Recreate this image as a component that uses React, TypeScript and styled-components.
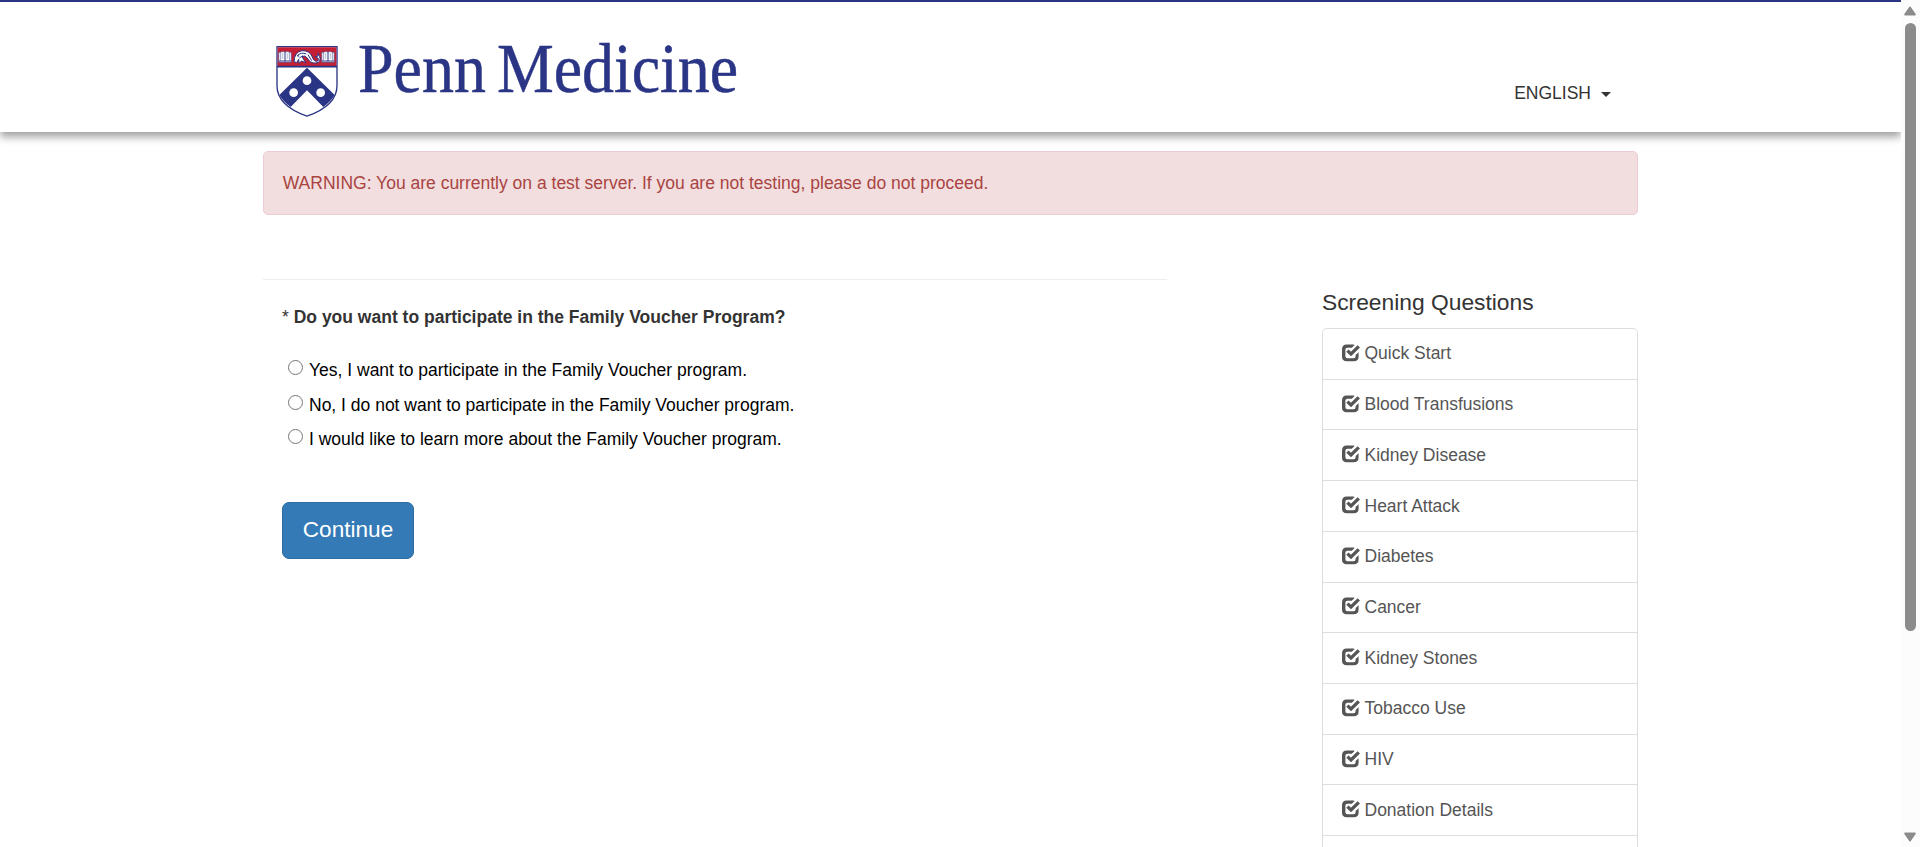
import React from "react";
import styled, { createGlobalStyle } from "styled-components";

const navy = "#2a3585";

const GlobalStyle = createGlobalStyle`
  * { box-sizing: border-box; }
  body {
    margin: 0;
    overflow: hidden;
    background: #fff;
    color: #333;
    font: 17.5px/25px "Liberation Sans", Arial, sans-serif;
  }
`;

const Window = styled.div`
  display: grid;
  grid-template-columns: 1fr 19px;
  height: 847px;
  overflow: hidden;
`;

const Page = styled.div`
  height: 847px;
  overflow: hidden;
`;

const Header = styled.header`
  height: 132px;
  border-top: 2px solid ${navy};
  box-shadow: 0 5px 8px rgba(0, 0, 0, 0.37);
`;

const Container = styled.div`
  width: 1375px;
  margin: 0 auto 0 263px;
`;

const HeaderRow = styled(Container)`
  display: flex;
  justify-content: space-between;
  align-items: flex-start;
`;

const Brand = styled.div`
  display: flex;
  padding: 38px 0 0 13px;
`;

const BrandName = styled.svg`
  display: block;
  margin-left: 19px;
  overflow: visible;
  font-family: "Liberation Serif", serif;
  fill: ${navy};
  stroke: ${navy};
  stroke-width: 0.5px;
`;

const Crest = styled.svg`
  display: block;
  margin-top: 6px;
`;

const Language = styled.div`
  display: flex;
  align-items: center;
  gap: 10px;
  padding: 79px 27px 0 0;
`;

const Caret = styled.span`
  border: 5px solid transparent;
  border-top-color: #333;
  border-bottom: 0;
  margin-top: 2px;
`;

const Alert = styled.div`
  height: 64px;
  margin-top: 19px;
  padding: 18.75px;
  border: 1px solid #ebccd1;
  border-radius: 5px;
  background: #f2dede;
  color: #a94442;
`;

const Columns = styled.div`
  display: flex;
  justify-content: space-between;
  margin-top: 64px;
`;

const Survey = styled.main`
  width: 904px;
  border-top: 1px solid #eee;
  padding: 25px 19px 0;
`;

const Question = styled.div`
  margin-bottom: 26px;
`;

const Option = styled.label`
  display: flex;
  align-items: flex-start;
  height: 34.5px;
  padding-top: 2px;
  color: #000;
`;

const Radio = styled.input`
  appearance: none;
  width: 15px;
  height: 15px;
  margin: 2px 6px 0 6px;
  border: 1px solid #767676;
  border-radius: 50%;
  background: #fff;
`;

const Continue = styled.button`
  display: block;
  width: 132px;
  height: 57px;
  margin-top: 42.5px;
  padding: 0 0 2px;
  border: 1px solid #2e6da4;
  border-radius: 7px;
  background: #337ab7;
  color: #fff;
  font: 22.6px/30px "Liberation Sans", Arial, sans-serif;
`;

const Sidebar = styled.aside`
  width: 316px;
  padding-top: 11px;
`;

const SideTitle = styled.h4`
  margin: 0 0 13px;
  font-size: 22.8px;
  font-weight: 400;
  line-height: 25px;
`;

const List = styled.div`
  border: 1px solid #ddd;
  border-radius: 5px;
`;

const Item = styled.a`
  display: flex;
  align-items: center;
  height: 50.73px;
  padding: 0 19px;
  gap: 4.5px;
  color: #555;
  border-bottom: 1px solid #ddd;

  svg {
    margin-bottom: 2px;
  }
`;

const Track = styled.div`
  display: flex;
  flex-direction: column;
  align-items: center;
  background: #fcfcfc;
  padding: 6px 1px 5px 0;
`;

const Thumb = styled.div`
  width: 11px;
  height: 608px;
  margin: 7px 0 auto;
  border-radius: 6px;
  background: #8b8b8b;
`;

function Book({ x }: { x: number }) {
  return (
    <g transform={`translate(${x} 62)`}>
      <path d="M0 4H5Q12 0 19 3Q26 0 33 4H38V34H0Z" fill="#fff" stroke={navy} strokeWidth="1.5" />
      <path d="M19 3V31" stroke={navy} strokeWidth="3" />
      <path d="M9 9H14M9 15H14M9 21H14M24 9H29M24 15H29M24 21H29" stroke={navy} strokeWidth="1.5" />
      <path d="M5 4V29M33 4V29" stroke={navy} strokeWidth="1.5" />
      <path d="M1 30H37" stroke={navy} strokeWidth="3" />
    </g>
  );
}

function Shield() {
  return (
    <Crest width="62" height="71" viewBox="49 47 186 213">
      <path d="M52 49H232V166C232 212 188 241 142 257.5C96 241 52 212 52 166Z" fill="#fff" stroke={navy} strokeWidth="4" />
      <path d="M54 51H230V109H54Z" fill="#c41f35" />
      <path d="M52 109H232" stroke={navy} strokeWidth="5" />
      <Book x={57} />
      <Book x={186} />
      <path d="M103 94Q104 65 127 61Q150 60 158 80Q163 96 174 92Q181 87 173 82L166 79L174 78L175 69L180 79Q186 95 169 98Q151 100 143 83Q135 73 127 79L138 97L126 92L118 99L117 87L111 97Z" fill="#fff" stroke={navy} strokeWidth="3" />
      <path d="M112 77Q124 64 140 71M119 83L130 76M145 73L156 91" fill="none" stroke={navy} strokeWidth="3" />
      <circle cx="116" cy="77" r="2.5" fill={navy} />
      <path d="M142 112L225 194Q213 214 191 230L142 180L93 230Q71 214 59 194Z" fill={navy} />
      <circle cx="142" cy="151" r="13" fill="#fff" />
      <circle cx="102" cy="187" r="13" fill="#fff" />
      <circle cx="183" cy="187" r="13" fill="#fff" />
    </Crest>
  );
}

function CheckIcon() {
  return (
    <svg width="18" height="18" viewBox="0 0 18 18">
      <path d="M12.4 1.2L9.8 3.8H5.4Q3.4 3.8 3.4 5.6V12.2Q3.4 14.2 5.4 14.2H11.6Q13.6 14.2 13.6 12.2V11L16.6 8.2V12.4Q16.6 17.2 11.8 17.2H4.8Q0 17.2 0 12.4V5.4Q0 .6 4.8 .6H12Z" fill="#555" />
      <path d="M5.4 6.6L9 10L16.8 2.4" fill="none" stroke="#555" strokeWidth="3.3" />
    </svg>
  );
}

const options = [
  "Yes, I want to participate in the Family Voucher program.",
  "No, I do not want to participate in the Family Voucher program.",
  "I would like to learn more about the Family Voucher program.",
];

const topics = [
  "Quick Start", "Blood Transfusions", "Kidney Disease", "Heart Attack", "Diabetes",
  "Cancer", "Kidney Stones", "Tobacco Use", "HIV", "Donation Details",
];

export default function App() {
  return (
    <Window>
      <GlobalStyle />
      <Page>
        <Header>
          <HeaderRow>
            <Brand>
              <Shield />
              <BrandName width="384" height="60">
                <text x="1" y="52" fontSize="70" textLength="128" lengthAdjust="spacingAndGlyphs">Penn</text>
                <text x="140" y="52" fontSize="70" textLength="241" lengthAdjust="spacingAndGlyphs">Medicine</text>
              </BrandName>
            </Brand>
            <Language>ENGLISH <Caret /></Language>
          </HeaderRow>
        </Header>
        <Container>
          <Alert>WARNING: You are currently on a test server. If you are not testing, please do not proceed.</Alert>
          <Columns>
            <Survey>
              <Question>* <b>Do you want to participate in the Family Voucher Program?</b></Question>
              {options.map((o) => (
                <Option key={o}><Radio type="radio" name="voucher" />{o}</Option>
              ))}
              <Continue>Continue</Continue>
            </Survey>
            <Sidebar>
              <SideTitle>Screening Questions</SideTitle>
              <List>
                {topics.map((t) => <Item key={t}><CheckIcon />{t}</Item>)}
                <Item />
              </List>
            </Sidebar>
          </Columns>
        </Container>
      </Page>
      <Track>
        <svg width="12" height="10" viewBox="0 0 12 10"><path d="M6 1.5L10.8 8.5H1.2Z" fill="#8b8b8b" stroke="#8b8b8b" strokeWidth="2" strokeLinejoin="round" /></svg>
        <Thumb />
        <svg width="12" height="10" viewBox="0 0 12 10"><path d="M6 8.5L10.8 1.5H1.2Z" fill="#8b8b8b" stroke="#8b8b8b" strokeWidth="2" strokeLinejoin="round" /></svg>
      </Track>
    </Window>
  );
}
